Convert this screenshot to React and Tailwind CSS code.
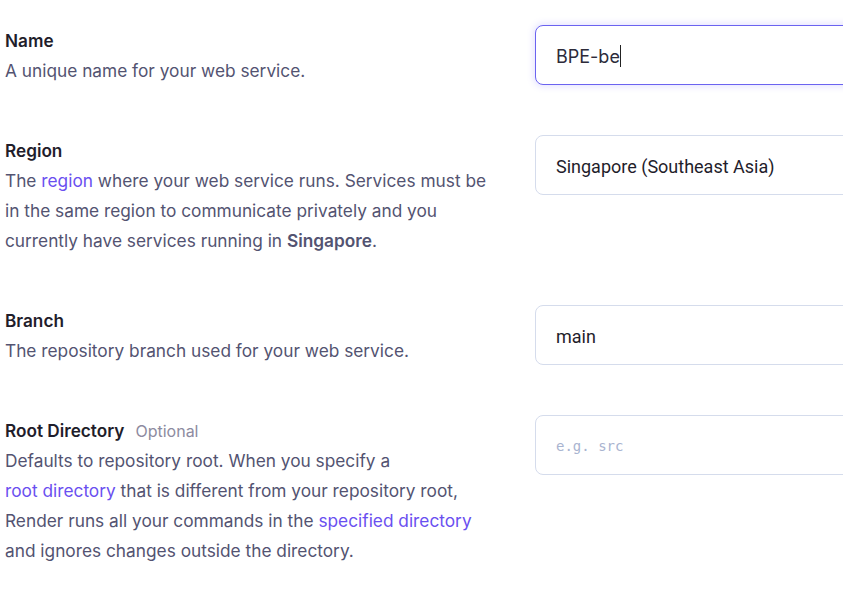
const Link = ({ children }) => <span className="text-[#6a4ff0]">{children}</span>;

const Field = ({ title, optional, children, input }) => (
  <div className="flex items-start">
    <div className="w-[530px] shrink-0 pt-px">
      <div className="text-[17.2px] leading-[30px] font-semibold text-[#1f1d2b]">
        {title}
        {optional && <span className="ml-[11px] text-[16px] font-normal text-[#8d8ba0]">Optional</span>}
      </div>
      <div className="text-[17.3px] leading-[30px] text-[#535371] w-[492px]">{children}</div>
    </div>
    {input}
  </div>
);

const boxBase = 'w-[400px] h-[60px] shrink-0 rounded-[8px] border bg-white flex items-center pl-[20px] pt-[2px]';

export default function App() {
  return (
    <div className="w-[843px] h-[602px] overflow-hidden bg-white font-['Inter',sans-serif] pl-[5px] pt-[25px] flex flex-col gap-[49px]">
      <Field
        title="Name"
        input={
          <div className={`${boxBase} border-[#6b63f0] shadow-[0_0_6px_2px_rgba(120,110,255,0.18)]`}>
            <span className="text-[18px] text-[#2d2b3a] font-['Inter',sans-serif]">BPE-be</span>
            <span className="w-px h-[22px] bg-[#222]" />
          </div>
        }
      >
        A unique name for your web service.
      </Field>

      <Field
        title="Region"
        input={
          <div className={`${boxBase} border-[#d5dcec]`}>
            <span className="text-[18px] text-[#1f1d2b] font-['Roboto',sans-serif]">Singapore (Southeast Asia)</span>
          </div>
        }
      >
        The <Link>region</Link> where your web service runs. Services must be in the same region to communicate privately and you currently have services running in <span className="font-semibold">Singapore</span>.
      </Field>

      <Field
        title="Branch"
        input={
          <div className={`${boxBase} border-[#d5dcec]`}>
            <span className="text-[18px] text-[#1f1d2b] font-['Roboto',sans-serif]">main</span>
          </div>
        }
      >
        The repository branch used for your web service.
      </Field>

      <Field
        title="Root Directory"
        optional
        input={
          <div className={`${boxBase} border-[#d5dcec]`}>
            <span className="text-[14px] text-[#a9b4d0] font-['DejaVu_Sans_Mono',monospace]">e.g. src</span>
          </div>
        }
      >
        Defaults to repository root. When you specify a
        <br />
        <Link>root directory</Link> that is different from your repository root, Render runs all your commands in the <Link>specified directory</Link> and ignores changes outside the directory.
      </Field>
    </div>
  );
}
